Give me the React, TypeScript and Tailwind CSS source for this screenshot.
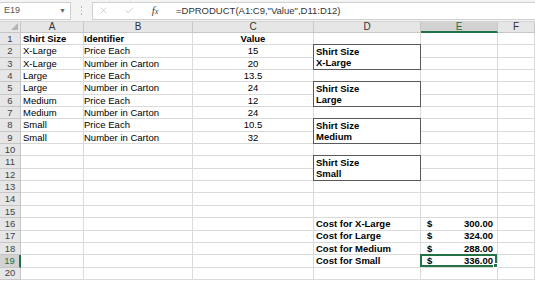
import React from "react";
import { X, Check } from "lucide-react";

const data: [string, string, string][] = [
  ["Shirt Size", "Identifier", "Value"],
  ["X-Large", "Price Each", "15"],
  ["X-Large", "Number in Carton", "20"],
  ["Large", "Price Each", "13.5"],
  ["Large", "Number in Carton", "24"],
  ["Medium", "Price Each", "12"],
  ["Medium", "Number in Carton", "24"],
  ["Small", "Price Each", "10.5"],
  ["Small", "Number in Carton", "32"],
];

const boxes: Record<number, string> = { 2: "X-Large", 5: "Large", 8: "Medium", 11: "Small" };
const costs: Record<number, [string, string]> = {
  16: ["Cost for X-Large", "300.00"],
  17: ["Cost for Large", "324.00"],
  18: ["Cost for Medium", "288.00"],
  19: ["Cost for Small", "336.00"],
};

const cell = "border-r border-b border-[#dadada] flex items-center overflow-visible whitespace-nowrap";

export default function App() {
  const rows: React.ReactNode[] = [];
  for (let r = 1; r <= 20; r++) {
    const sel = r === 19;
    rows.push(
      <div
        key={`h${r}`}
        className={
          sel
            ? "bg-[#d2d2d2] border-b border-[#c6c6c6] border-r-2 border-r-[#217346] flex items-center justify-center text-[#217346] text-[9.5px]"
            : "bg-[#e6e6e6] border-r border-b border-[#c6c6c6] flex items-center justify-center text-[#444] text-[9.5px]"
        }
      >
        {r}
      </div>
    );
    const d = data[r - 1];
    const bold = r === 1 ? " font-bold" : "";
    rows.push(
      <div key={`a${r}`} className={`${cell} pl-[2px]${bold}`}>
        {d ? d[0] : ""}
      </div>
    );
    rows.push(
      <div key={`b${r}`} className={`${cell} pl-[3px]${bold}`}>
        {d ? d[1] : ""}
      </div>
    );
    rows.push(
      <div key={`c${r}`} className={`${cell} justify-center${bold}`}>
        {d ? d[2] : ""}
      </div>
    );
    // D column
    if (boxes[r]) {
      rows.push(
        <div
          key={`d${r}`}
          className="row-span-2 -ml-px -mt-px border border-[#5a5a5a] flex flex-col font-bold bg-white z-10"
        >
          <div className="flex-1 flex items-center pl-[2px]">Shirt Size</div>
          <div className="flex-1 flex items-center pl-[2px]">{boxes[r]}</div>
        </div>
      );
    } else if (!boxes[r - 1]) {
      const c = costs[r];
      rows.push(
        <div key={`d${r}`} className={`${cell} pl-[2px] font-bold`}>
          {c ? c[0] : ""}
        </div>
      );
    }
    const c = costs[r];
    rows.push(
      <div key={`e${r}`} className={`${cell} relative font-bold justify-between pl-[6px] pr-[4px]`}>
        {c ? (
          <>
            <span>$</span>
            <span>{c[1]}</span>
          </>
        ) : null}
        {sel ? (
          <div className="absolute -left-px -top-px right-0 bottom-0 border-2 border-[#217346] pointer-events-none">
            <div className="absolute -right-[3px] -bottom-[3px] w-[5px] h-[5px] bg-[#217346] border border-white" />
          </div>
        ) : null}
      </div>
    );
    rows.push(<div key={`f${r}`} className={cell} />);
  }

  const headers = ["A", "B", "C", "D", "E", "F"];

  return (
    <div className="w-[535px] h-[281px] bg-white overflow-hidden font-['Liberation_Sans',Arial,sans-serif] text-[9.5px] text-black leading-none">
      {/* formula bar */}
      <div className="h-[22px] bg-[#f3f3f3] flex items-center border-b border-[#d4d4d4]">
        <div className="w-[71px] h-[18px] bg-white border border-[#d0d0d0] border-l-0 flex items-center justify-between pl-[4px] pr-[4px] text-[#555] text-[9px]">
          <span>E19</span>
          <span className="text-[7px] text-[#666]">▼</span>
        </div>
        <div className="w-[21px] flex flex-col items-center gap-[2px]">
          <div className="w-[1.5px] h-[1.5px] bg-[#b5b5b5]" />
          <div className="w-[1.5px] h-[1.5px] bg-[#b5b5b5]" />
          <div className="w-[1.5px] h-[1.5px] bg-[#b5b5b5]" />
        </div>
        <div className="flex-1 h-[18px] bg-white border border-[#d0d0d0] border-r-0 flex items-center">
          <div className="w-[20px] flex justify-center ml-[0px]">
            <X size={11} strokeWidth={1.3} color="#b4b4b4" />
          </div>
          <div className="w-[25px] flex justify-center ml-[4px]">
            <Check size={11} strokeWidth={1.3} color="#b4b4b4" />
          </div>
          <div className="w-[20px] flex justify-center ml-[3px] font-['Liberation_Serif',serif] italic text-[#444] text-[11px]">
            f<span className="text-[8px] mt-[3px]">x</span>
          </div>
          <div className="pl-[11px] text-[#333] text-[9.5px]">=DPRODUCT(A1:C9,"Value",D11:D12)</div>
        </div>
      </div>
      {/* grid */}
      <div className="grid grid-cols-[21px_63px_109px_121px_107px_77px_1fr] grid-rows-[11px_repeat(20,12.35px)]">
        <div className="bg-[#e6e6e6] border-r border-b border-[#c6c6c6] relative">
          <div className="absolute right-[2px] bottom-[2px] w-0 h-0 border-l-[7px] border-l-transparent border-b-[7px] border-b-[#b4b4b4]" />
        </div>
        {headers.map((h) =>
          h === "E" ? (
            <div
              key={h}
              className="bg-[#d2d2d2] border-r border-[#c6c6c6] border-b-2 border-b-[#217346] flex items-center justify-center text-[#217346] text-[10px]"
            >
              {h}
            </div>
          ) : (
            <div
              key={h}
              className="bg-[#e6e6e6] border-r border-b border-[#c6c6c6] flex items-center justify-center text-[#333] text-[10px]"
            >
              {h}
            </div>
          )
        )}
        {rows}
      </div>
    </div>
  );
}
